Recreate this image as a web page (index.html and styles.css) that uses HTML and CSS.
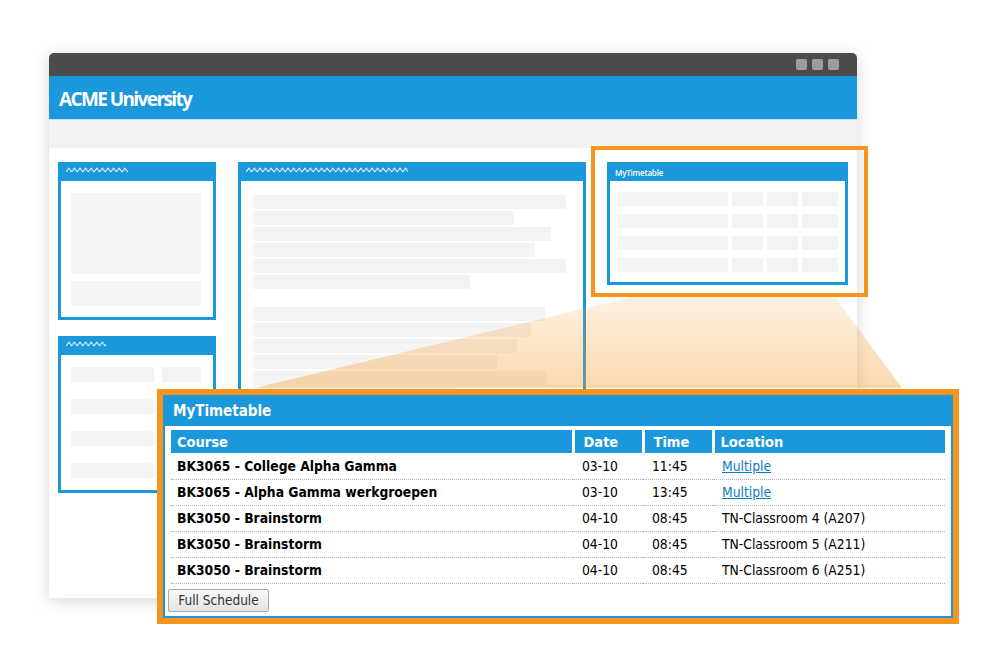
FILE: index.html
```html
<!DOCTYPE html>
<html lang="en">
<head>
    <meta charset="UTF-8">
    <meta name="viewport" content="width=device-width, initial-scale=1.0">
    <title>MyTimetable widget</title>
    <link rel="stylesheet" href="styles.css">
</head>
<body>

<div class="stage">
    <!-- shared zigzag pattern for the widget titles -->
    <svg class="defs" width="0" height="0">
        <defs>
            <pattern id="zigzag" width="5.6" height="6" patternUnits="userSpaceOnUse">
                <path d="M0 5 L2.8 1 L5.6 5" fill="none" stroke="#ffffff" stroke-width="1"/>
            </pattern>
        </defs>
    </svg>

    <div class="window">
        <div class="titlebar">
            <span class="win-btn"></span>
            <span class="win-btn"></span>
            <span class="win-btn"></span>
        </div>
        <div class="site-header">ACME University</div>
        <div class="nav-band"></div>

        <div class="content">
            <div class="col-left">
                <div class="widget widget-a">
                    <div class="widget-head">
                        <svg width="62" height="6"><rect width="62" height="6" fill="url(#zigzag)"/></svg>
                    </div>
                    <div class="widget-body">
                        <div class="ph ph-image"></div>
                        <div class="ph ph-caption"></div>
                    </div>
                </div>

                <div class="widget widget-c">
                    <div class="widget-head">
                        <svg width="40" height="6"><rect width="40" height="6" fill="url(#zigzag)"/></svg>
                    </div>
                    <div class="widget-body list-rows">
                        <div class="list-row"><div class="ph"></div><div class="ph"></div></div>
                        <div class="list-row"><div class="ph"></div><div class="ph"></div></div>
                        <div class="list-row"><div class="ph"></div><div class="ph"></div></div>
                        <div class="list-row"><div class="ph"></div><div class="ph"></div></div>
                    </div>
                </div>
            </div>

            <div class="widget widget-b">
                <div class="widget-head">
                    <svg width="162" height="6"><rect width="162" height="6" fill="url(#zigzag)"/></svg>
                </div>
                <div class="widget-body text-lines">
                    <div class="ph line" style="width: 313px"></div>
                    <div class="ph line" style="width: 261px"></div>
                    <div class="ph line" style="width: 298px"></div>
                    <div class="ph line" style="width: 282px"></div>
                    <div class="ph line" style="width: 313px"></div>
                    <div class="ph line" style="width: 217px"></div>
                    <div class="para-gap"></div>
                    <div class="ph line" style="width: 292px"></div>
                    <div class="ph line" style="width: 278px"></div>
                    <div class="ph line" style="width: 264px"></div>
                    <div class="ph line" style="width: 244px"></div>
                    <div class="ph line" style="width: 293px"></div>
                    <div class="ph line" style="width: 204px"></div>
                </div>
            </div>

            <div class="widget widget-d">
                <div class="widget-head mini-title">MyTimetable</div>
                <div class="widget-body mini-grid">
                    <div class="ph"></div><div class="ph"></div><div class="ph"></div><div class="ph"></div>
                    <div class="ph"></div><div class="ph"></div><div class="ph"></div><div class="ph"></div>
                    <div class="ph"></div><div class="ph"></div><div class="ph"></div><div class="ph"></div>
                    <div class="ph"></div><div class="ph"></div><div class="ph"></div><div class="ph"></div>
                </div>
            </div>
        </div>
    </div>

    <!-- zoom beam from the small widget to the enlarged one -->
    <svg class="beam" width="1000" height="649">
        <defs>
            <linearGradient id="beamFill" x1="0" y1="0" x2="0" y2="1">
                <stop offset="0" stop-color="#f7941e" stop-opacity="0.13"/>
                <stop offset="1" stop-color="#f7941e" stop-opacity="0.36"/>
            </linearGradient>
        </defs>
        <polygon points="632,297 835,297 902,388 255,388" fill="url(#beamFill)"/>
    </svg>

    <div class="focus-box"></div>

    <div class="callout">
        <div class="timetable">
            <div class="timetable-head">MyTimetable</div>
            <div class="timetable-body">
                <table>
                    <thead>
                        <tr>
                            <th class="c-course">Course</th>
                            <th class="c-date">Date</th>
                            <th class="c-time">Time</th>
                            <th class="c-loc">Location</th>
                        </tr>
                    </thead>
                    <tbody>
                        <tr>
                            <td class="course">BK3065 - College Alpha Gamma</td>
                            <td>03-10</td>
                            <td>11:45</td>
                            <td><a href="#">Multiple</a></td>
                        </tr>
                        <tr>
                            <td class="course">BK3065 - Alpha Gamma werkgroepen</td>
                            <td>03-10</td>
                            <td>13:45</td>
                            <td><a href="#">Multiple</a></td>
                        </tr>
                        <tr>
                            <td class="course">BK3050 - Brainstorm</td>
                            <td>04-10</td>
                            <td>08:45</td>
                            <td>TN-Classroom 4 (A207)</td>
                        </tr>
                        <tr>
                            <td class="course">BK3050 - Brainstorm</td>
                            <td>04-10</td>
                            <td>08:45</td>
                            <td>TN-Classroom 5 (A211)</td>
                        </tr>
                        <tr>
                            <td class="course">BK3050 - Brainstorm</td>
                            <td>04-10</td>
                            <td>08:45</td>
                            <td>TN-Classroom 6 (A251)</td>
                        </tr>
                    </tbody>
                </table>
                <button class="full-btn">Full Schedule</button>
            </div>
        </div>
    </div>
</div>

</body>
</html>
```

FILE: styles.css
```css
* {
    box-sizing: border-box;
}
body {
    margin: 0;
    background-color: #ffffff;
    font-family: 'Open Sans', 'DejaVu Sans', sans-serif;
}
.stage {
    position: relative;
    width: 1000px;
    height: 649px;
    padding: 53px 0 0 49px;
    overflow: hidden;
}
.defs {
    position: absolute;
}

/* browser window */
.window {
    width: 808px;
    height: 545px;
    background-color: #ffffff;
    border-radius: 5px 5px 0 0;
    box-shadow: 0 3px 16px rgba(0, 0, 0, 0.17);
    overflow: hidden;
}
.titlebar {
    height: 23px;
    background-color: #4b4b4b;
    display: flex;
    justify-content: flex-end;
    align-items: center;
    gap: 5px;
    padding-right: 18px;
}
.win-btn {
    width: 11px;
    height: 11px;
    border-radius: 2px;
    background-color: #9d9d9d;
}
.site-header {
    height: 44px;
    background-color: #1a98db;
    border-bottom: 1px solid #bfe0f3;
    color: #ffffff;
    font-family: 'Open Sans', sans-serif;
    font-weight: 700;
    font-size: 19px;
    letter-spacing: -1.6px;
    display: flex;
    align-items: center;
    padding: 2px 0 0 10px;
}
.nav-band {
    height: 28px;
    background-color: #f2f2f2;
}
.content {
    display: flex;
    align-items: flex-start;
    padding: 14px 9px;
}
.col-left {
    width: 158px;
    display: flex;
    flex-direction: column;
    gap: 16px;
}

/* generic wireframe widget */
.widget {
    border: 3px solid #1a98db;
    background-color: #ffffff;
}
.widget-head {
    height: 16px;
    background-color: #1a98db;
    padding: 2px 0 0 5px;
}
.widget-head svg {
    display: block;
}
.ph {
    background-color: #f4f4f4;
}
.widget-a {
    height: 158px;
}
.widget-a .widget-body {
    padding: 12px 12px 0 10px;
}
.ph-image {
    height: 81px;
}
.ph-caption {
    height: 25px;
    margin-top: 7px;
}
.widget-c {
    height: 157px;
}
.list-rows {
    padding: 12px 12px 0 10px;
    display: flex;
    flex-direction: column;
    gap: 17px;
}
.list-row {
    display: flex;
    gap: 8px;
}
.list-row .ph {
    height: 15px;
    width: 83px;
}
.list-row .ph + .ph {
    width: 39px;
}
.widget-b {
    width: 348px;
    height: 350px;
    margin-left: 22px;
}
.text-lines {
    padding: 14px 0 0 12px;
    display: flex;
    flex-direction: column;
    gap: 2px;
}
.text-lines .line {
    height: 14px;
}
.para-gap {
    height: 14px;
}
.widget-d {
    width: 241px;
    height: 123px;
    margin-left: 21px;
}
.mini-title {
    color: #ffffff;
    font-family: 'Open Sans', sans-serif;
    font-size: 8px;
    font-weight: 600;
    line-height: 16px;
    padding: 0 0 0 5px;
    letter-spacing: -0.2px;
}
.mini-grid {
    display: grid;
    grid-template-columns: 111px 31px 31px 36px;
    column-gap: 4px;
    row-gap: 8px;
    padding: 11px 7px 0 7px;
}
.mini-grid .ph {
    height: 14px;
}

/* overlays */
.beam {
    position: absolute;
    left: 0;
    top: 0;
}
.focus-box {
    position: absolute;
    left: 591px;
    top: 146px;
    width: 277px;
    height: 151px;
    border: 4px solid #f7941e;
}
.callout {
    position: absolute;
    left: 157px;
    top: 389px;
    width: 802px;
    height: 235px;
    border: 6px solid #f7941e;
    background-color: #ffffff;
}
.timetable {
    height: 100%;
    border: 2px solid #1a98db;
    font-family: 'DejaVu Sans Condensed', 'DejaVu Sans', Verdana, sans-serif;
}
.timetable-head {
    height: 29px;
    background-color: #1a98db;
    color: #ffffff;
    font-weight: bold;
    font-size: 15px;
    line-height: 29px;
    padding-left: 8px;
}
.timetable-body {
    padding: 4px 6px 0 6px;
}
.timetable table {
    width: 774px;
    border-collapse: collapse;
    font-size: 13.75px;
    color: #000000;
}
.timetable th {
    height: 23px;
    background-color: #1a98db;
    color: #ffffff;
    font-size: 14.5px;
    font-weight: bold;
    text-align: left;
    padding: 0 0 0 6px;
    border-left: 3px solid #ffffff;
}
.timetable th.c-course {
    width: 402px;
    border-left: none;
}
.timetable th.c-date,
.timetable th.c-time {
    width: 70px;
    padding-left: 9px;
}
.timetable td {
    height: 26px;
    padding: 0 0 0 6px;
    border-bottom: 1px dotted #b4b4b4;
}
.timetable td + td {
    padding-left: 9px;
}
.timetable td.course {
    font-weight: bold;
}
.timetable a {
    color: #0b7cc3;
}
.full-btn {
    margin: 5px 0 0 -3px;
    height: 23px;
    width: 101px;
    padding: 0;
    font-family: 'DejaVu Sans Condensed', 'DejaVu Sans', sans-serif;
    font-size: 13.5px;
    color: #333333;
    background: linear-gradient(#f8f8f8, #e4e4e4);
    border: 1px solid #a8a8a8;
    border-radius: 2px;
}
```
